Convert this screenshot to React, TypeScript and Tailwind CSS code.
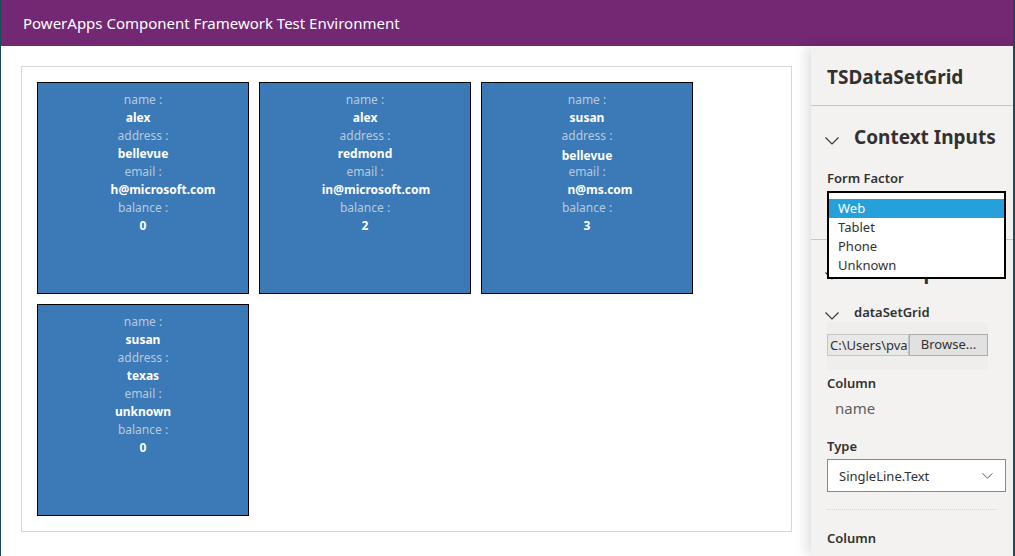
import React from 'react';

interface Record {
  name: string;
  address: string;
  email: string;
  balance: string;
  nameCls: string;
  addressCls: string;
  emailCls: string;
}

const records: Record[] = [
  { name: 'alex', address: 'bellevue', email: 'h@microsoft.com', balance: '0', nameCls: 'mr-[10px]', addressCls: '', emailCls: 'ml-[40px]' },
  { name: 'alex', address: 'redmond', email: 'in@microsoft.com', balance: '2', nameCls: '', addressCls: '', emailCls: 'ml-[22px]' },
  { name: 'susan', address: 'bellevue', email: 'n@ms.com', balance: '3', nameCls: '', addressCls: 'mt-[2px] -mb-[2px]', emailCls: 'ml-[26px]' },
  { name: 'susan', address: 'texas', email: 'unknown', balance: '0', nameCls: '', addressCls: '', emailCls: '' },
];

const Chevron: React.FC<{ className?: string }> = ({ className }) => (
  <svg viewBox="0 0 14 8" className={className} fill="none" stroke="#323130" strokeWidth="1.1">
    <polyline points="0.5,0.5 7,7 13.5,0.5" />
  </svg>
);

const Card: React.FC<{ r: Record }> = ({ r }) => (
  <div className="h-[212px] w-[212px] border border-black bg-[#3b79b7] pt-[8px] flex flex-col items-center text-[12px] leading-[18px]">
    <span className="text-[#b8c9dc]">name :</span>
    <span className={`font-bold text-white ${r.nameCls}`}>{r.name}</span>
    <span className="text-[#b8c9dc]">address :</span>
    <span className={`font-bold text-white ${r.addressCls}`}>{r.address}</span>
    <span className="text-[#b8c9dc]">email :</span>
    <span className={`font-bold text-white ${r.emailCls}`}>{r.email}</span>
    <span className="text-[#b8c9dc]">balance :</span>
    <span className="font-bold text-white">{r.balance}</span>
  </div>
);

const SectionHeader: React.FC<{ title: string }> = ({ title }) => (
  <div className="flex h-[30px] items-center pl-[14px]">
    <Chevron className="mt-[8px] h-[8px] w-[14px]" />
    <span className="ml-[15px] text-[19px] font-bold text-[#323130]">{title}</span>
  </div>
);

export default function App() {
  return (
    <div className="flex h-[556px] w-[1015px] flex-col overflow-hidden border-l border-r-2 border-[#1b4a55] font-['Noto_Sans',sans-serif]">
      <header className="flex h-[46px] shrink-0 items-center bg-[#722873] px-[22px] text-[15px] text-white">
        PowerApps Component Framework Test Environment
      </header>
      <div className="flex min-h-0 flex-1">
        <main className="flex-1 bg-white pl-[20px] pt-[20px]">
          <div className="h-[466px] w-[771px] border border-[#d6d6d6] p-[15px]">
            <div className="grid grid-cols-[repeat(3,212px)] gap-[10px]">
              {records.map((r, i) => (
                <Card key={i} r={r} />
              ))}
            </div>
          </div>
        </main>
        <aside className="relative z-10 w-[202px] shrink-0 bg-[#f3f2f1] text-[#323130] shadow-[-5px_0_12px_rgba(0,0,0,0.12)]">
          <div className="flex h-[60px] items-center border-b border-[#c8c6c4] pl-[16px] pt-[3px] text-[19px] font-bold">
            TSDataSetGrid
          </div>
          <div className="mt-[16px]">
            <SectionHeader title="Context Inputs" />
          </div>
          <div className="mt-[17px] flex h-[20px] items-center pl-[16px] text-[13px] font-semibold">Form Factor</div>
          <div className="ml-[16px] mt-[2px] h-[32px] w-[179px] border border-[#8a8886] bg-white" />
          <div className="mt-[16px] h-px bg-[#c8c6c4]" />
          <div className="mt-[17px]">
            <SectionHeader title="Data Inputs" />
          </div>
          <div className="mt-[16px] flex h-[19px] items-center pl-[14px]">
            <Chevron className="mt-[6px] h-[8px] w-[14px]" />
            <span className="ml-[15px] text-[13px] font-semibold">dataSetGrid</span>
          </div>
          <div className="ml-[16px] h-[48px] w-[161px] bg-[#efeeed] pt-[12px]">
            <div className="flex h-[22px] text-[13px]">
              <div className="w-[82px] overflow-hidden whitespace-nowrap border border-[#c5c5c5] bg-[#e8e8e8] pl-[2px] leading-[20px]">
                C:\Users\pvay
              </div>
              <div className="flex w-[79px] items-center justify-center border border-[#adadad] bg-[#e1e1e1]">Browse...</div>
            </div>
          </div>
          <div className="mt-[4px] flex h-[20px] items-center pl-[16px] text-[13px] font-semibold">Column</div>
          <div className="mt-[4px] flex h-[20px] items-center pl-[24px] text-[15px] text-[#605e5c]">name</div>
          <div className="mt-[19px] flex h-[20px] items-center pl-[16px] text-[13px] font-semibold">Type</div>
          <div className="ml-[16px] mt-[2px] flex h-[33px] w-[179px] items-center justify-between border border-[#8a8886] bg-white pl-[11px] pr-[12px] text-[13px]">
            <span className="mt-[2px]">SingleLine.Text</span>
            <Chevron className="h-[6px] w-[11px]" />
          </div>
          <div className="ml-[16px] mt-[17px] w-[170px] border-t border-dotted border-[#d8d6d4]" />
          <div className="mt-[19px] flex h-[20px] items-center pl-[16px] text-[13px] font-semibold">Column</div>
          <div className="absolute left-[16px] top-[145px] h-[88px] w-[179px] border-2 border-black bg-white pt-[6px] text-[13px] leading-[19px]">
            <div className="bg-[#26a0da] pl-[9px] text-white">Web</div>
            <div className="pl-[9px]">Tablet</div>
            <div className="pl-[9px]">Phone</div>
            <div className="pl-[9px]">Unknown</div>
          </div>
        </aside>
      </div>
    </div>
  );
}
